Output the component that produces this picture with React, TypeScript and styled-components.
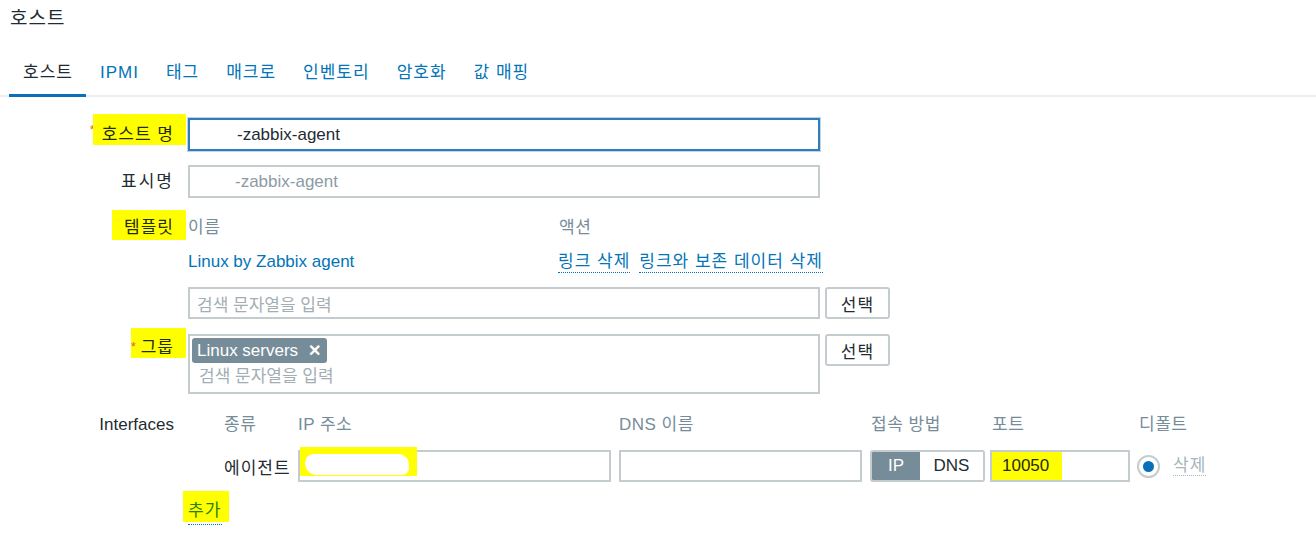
import React from "react";
import styled, { createGlobalStyle } from "styled-components";

const FONT = `"Liberation Sans", Arial, "Noto Sans CJK KR", sans-serif`;
const DARK = "#1f2c33";
const LINK = "#0275b8";
const MUTED = "#768d99";
const BORDER = "#c4ccd0";
const MARK = "#ffff00";

const GlobalStyle = createGlobalStyle`
  html, body { margin: 0; padding: 0; background: #ffffff; }
  body { font-family: ${FONT}; color: ${DARK}; font-size: 17px; }
  * { box-sizing: border-box; }
`;

const Page = styled.div`
  width: 1316px;
  height: 536px;
  overflow: hidden;
`;

const Title = styled.h1`
  margin: 8px 0 0 10px;
  font-size: 19px;
  letter-spacing: 1px;
  font-weight: normal;
  line-height: 22px;
  color: ${DARK};
`;

const TabList = styled.nav`
  display: flex;
  margin-top: 30px;
  padding-left: 9px;
  box-shadow: inset 0 -2px 0 #eceff1;
`;

const Tab = styled.span<{ $active?: boolean }>`
  padding: 0 13px 8px 14px;
  line-height: 26px;
  font-size: 17px;
  letter-spacing: 1px;
  white-space: nowrap;
  color: ${(p) => (p.$active ? DARK : LINK)};
  border-bottom: 3px solid ${(p) => (p.$active ? "#0a6fbb" : "transparent")};
`;

const Form = styled.div`
  margin-top: 21px;
  display: flex;
  flex-direction: column;
`;

const Row = styled.div<{ $mt?: number }>`
  display: grid;
  grid-template-columns: 188px 1fr;
  margin-top: ${(p) => p.$mt ?? 0}px;
`;

const LabelCell = styled.div<{ $mt?: number; $lh?: number }>`
  display: flex;
  justify-content: flex-end;
  align-items: flex-start;
  align-self: start;
  padding-right: 14px;
  margin-top: ${(p) => p.$mt ?? 0}px;
  line-height: ${(p) => p.$lh ?? 24}px;
  font-size: 17px;
  letter-spacing: 1px;
  white-space: nowrap;
  color: ${DARK};
`;

const PlainLabel = styled.span<{ $ls?: number }>`
  letter-spacing: ${(p) => p.$ls ?? 1}px;
`;

const Highlight = styled.span<{ $pt: number; $pb?: number; $pl: number; $pr?: number }>`
  display: inline-flex;
  align-items: flex-start;
  background: ${MARK};
  line-height: 20px;
  padding: ${(p) => `${p.$pt}px ${p.$pr ?? 12}px ${p.$pb ?? 0}px ${p.$pl}px`};
  margin-right: -${(p) => p.$pr ?? 12}px;
  color: #1f2c10;
`;

const Asterisk = styled.span<{ $gap?: number; $mt?: number }>`
  color: #e0633a;
  font-size: 13px;
  line-height: 12px;
  letter-spacing: 0;
  margin-top: ${(p) => p.$mt ?? 0}px;
  margin-right: ${(p) => p.$gap ?? 5}px;
`;

const TextBox = styled.div<{ $focused?: boolean; $w?: number; $h?: number; $pl?: number; $muted?: boolean }>`
  position: relative;
  width: ${(p) => p.$w ?? 632}px;
  height: ${(p) => p.$h ?? 33}px;
  border: 2px solid ${(p) => (p.$focused ? "#2f7cbc" : BORDER)};
  box-shadow: ${(p) => (p.$focused ? "0 0 0 1px #bcd6ec" : "none")};
  display: flex;
  align-items: center;
  padding-left: ${(p) => p.$pl ?? 7}px;
  font-size: 17px;
  white-space: nowrap;
  color: ${(p) => (p.$muted ? "#8c9ba3" : DARK)};
  background: #fff;
`;

const Placeholder = styled.span`
  color: #a3aeb4;
`;

const TwoCol = styled.div`
  display: grid;
  grid-template-columns: 371px auto;
  line-height: 24px;
`;

const HeadCell = styled.span`
  color: ${MUTED};
  font-size: 17px;
  letter-spacing: 0.5px;
`;

const TemplateLink = styled.span`
  color: ${LINK};
  font-size: 17px;
`;

const Actions = styled.div`
  display: flex;
  align-items: center;
  gap: 9px;
  margin-left: -1px;
`;

const DottedLink = styled.span<{ $muted?: boolean }>`
  color: ${(p) => (p.$muted ? "#a7b5bc" : LINK)};
  border-bottom: 1px dotted ${(p) => (p.$muted ? "#a7b5bc" : LINK)};
  line-height: 20px;
  letter-spacing: 1px;
  white-space: nowrap;
`;

const Stack = styled.div`
  display: flex;
  flex-direction: column;
`;

const LinkRow = styled(TwoCol)`
  margin-top: 10px;
`;

const FieldLine = styled.div<{ $mt?: number }>`
  display: flex;
  align-items: flex-start;
  gap: 5px;
  margin-top: ${(p) => p.$mt ?? 0}px;
`;

const SelectButton = styled.button`
  width: 65px;
  height: 32px;
  border: 2px solid ${BORDER};
  border-radius: 3px;
  background: #fff;
  font-family: ${FONT};
  font-size: 17px;
  letter-spacing: 1px;
  color: ${DARK};
  padding: 0;
`;

const MultiBox = styled.div`
  width: 632px;
  height: 60px;
  border: 2px solid ${BORDER};
  padding: 2px;
  display: flex;
  flex-direction: column;
  align-items: flex-start;
`;

const Chip = styled.span`
  display: inline-flex;
  align-items: center;
  gap: 10px;
  height: 25px;
  padding: 0 6px 0 5px;
  background: ${MUTED};
  border-radius: 3px;
  color: #fff;
  font-size: 17px;
  white-space: nowrap;
`;

const ChipX = styled.span`
  font-weight: bold;
  font-size: 16px;
`;

const MultiPlaceholder = styled(Placeholder)`
  margin: 2px 0 0 7px;
  line-height: 24px;
  white-space: nowrap;
`;

const IfaceGrid = styled.div`
  display: grid;
  grid-template-columns: 74px 321px 251px 120px 147px 36px auto;
  padding-left: 36px;
  align-items: center;
  white-space: nowrap;
`;

const IfaceHead = styled.span<{ $pl?: number }>`
  color: ${MUTED};
  line-height: 24px;
  letter-spacing: 0.5px;
  padding-left: ${(p) => p.$pl ?? 0}px;
`;

const IfaceData = styled(IfaceGrid)`
  margin-top: 13px;
`;

const TypeText = styled.span`
  color: ${DARK};
  letter-spacing: 1px;
`;

const Redact = styled.span`
  position: absolute;
  left: 0;
  top: -5px;
  width: 117px;
  height: 29px;
  background: ${MARK};
`;

const Scribble = styled.span`
  position: absolute;
  left: 5px;
  top: 7px;
  width: 104px;
  height: 21px;
  border-radius: 10px 12px 8px 14px;
  background: #fff;
`;

const Segmented = styled.div`
  display: flex;
  width: 115px;
  height: 32px;
  border: 2px solid ${BORDER};
  border-radius: 3px;
  overflow: hidden;
`;

const Segment = styled.span<{ $on?: boolean; $w: number }>`
  width: ${(p) => p.$w}px;
  display: flex;
  align-items: center;
  justify-content: center;
  background: ${(p) => (p.$on ? MUTED : "#fff")};
  color: ${(p) => (p.$on ? "#fff" : DARK)};
  font-size: 17px;
`;

const PortBox = styled(TextBox)`
  padding-left: 0;
  align-items: stretch;
`;

const PortMark = styled.span`
  display: flex;
  align-items: center;
  width: 70px;
  padding-left: 10px;
  background: ${MARK};
  color: #1f2c10;
`;

const Radio = styled.span`
  width: 23px;
  height: 23px;
  border: 2px solid ${BORDER};
  border-radius: 50%;
  display: flex;
  align-items: center;
  justify-content: center;
  &::after {
    content: "";
    width: 11px;
    height: 11px;
    border-radius: 50%;
    background: #0a6fbb;
  }
`;

const AddWrap = styled.div`
  display: inline-flex;
  flex-direction: column;
  align-items: flex-start;
  margin-top: 9px;
`;

const AddMark = styled.span`
  display: inline-block;
  background: ${MARK};
  padding: 10px 8px 1px 5px;
  margin-left: -5px;
  line-height: 20px;
  letter-spacing: 1px;
  color: #2a7f0c;
`;

const AddUnderline = styled.span`
  width: 34px;
  margin-top: 2px;
  border-top: 1px dotted ${LINK};
`;

export default function App() {
  return (
    <Page>
      <GlobalStyle />
      <Title>호스트</Title>
      <TabList>
        <Tab $active>호스트</Tab>
        <Tab>IPMI</Tab>
        <Tab>태그</Tab>
        <Tab>매크로</Tab>
        <Tab>인벤토리</Tab>
        <Tab>암호화</Tab>
        <Tab>값 매핑</Tab>
      </TabList>

      <Form>
        <Row>
          <LabelCell $mt={-4}>
            <Asterisk $gap={-2} $mt={10}>*</Asterisk>
            <Highlight $pt={11} $pl={9}>호스트 명</Highlight>
          </LabelCell>
          <TextBox $focused $pl={47}>-zabbix-agent</TextBox>
        </Row>

        <Row $mt={14}>
          <LabelCell $lh={33}>
            <PlainLabel $ls={2}>표시명</PlainLabel>
          </LabelCell>
          <TextBox $pl={45} $muted>-zabbix-agent</TextBox>
        </Row>

        <Row $mt={18}>
          <LabelCell $mt={-6}>
            <Highlight $pt={8} $pb={2} $pl={12}>템플릿</Highlight>
          </LabelCell>
          <Stack>
            <TwoCol>
              <HeadCell>이름</HeadCell>
              <HeadCell>액션</HeadCell>
            </TwoCol>
            <LinkRow>
              <TemplateLink>Linux by Zabbix agent</TemplateLink>
              <Actions>
                <DottedLink>링크 삭제</DottedLink>
                <DottedLink>링크와 보존 데이터 삭제</DottedLink>
              </Actions>
            </LinkRow>
            <FieldLine $mt={13}>
              <TextBox $h={32} $pl={7}>
                <Placeholder>검색 문자열을 입력</Placeholder>
              </TextBox>
              <SelectButton>선택</SelectButton>
            </FieldLine>
          </Stack>
        </Row>

        <Row $mt={15}>
          <LabelCell $mt={-6}>
            <Highlight $pt={10} $pl={0}>
              <Asterisk $mt={3}>*</Asterisk>그룹
            </Highlight>
          </LabelCell>
          <FieldLine>
            <MultiBox>
              <Chip>
                Linux servers<ChipX>✕</ChipX>
              </Chip>
              <MultiPlaceholder>검색 문자열을 입력</MultiPlaceholder>
            </MultiBox>
            <SelectButton>선택</SelectButton>
          </FieldLine>
        </Row>

        <Row $mt={19}>
          <LabelCell>
            <PlainLabel $ls={0}>Interfaces</PlainLabel>
          </LabelCell>
          <Stack>
            <IfaceGrid>
              <IfaceHead>종류</IfaceHead>
              <IfaceHead>IP 주소</IfaceHead>
              <IfaceHead>DNS 이름</IfaceHead>
              <IfaceHead $pl={1}>접속 방법</IfaceHead>
              <IfaceHead $pl={2}>포트</IfaceHead>
              <IfaceHead $pl={2}>디폴트</IfaceHead>
              <span />
            </IfaceGrid>
            <IfaceData>
              <TypeText>에이전트</TypeText>
              <TextBox $w={313} $h={32}>
                <Redact>
                  <Scribble />
                </Redact>
              </TextBox>
              <TextBox $w={243} $h={32} />
              <Segmented>
                <Segment $on $w={48}>IP</Segment>
                <Segment $w={63}>DNS</Segment>
              </Segmented>
              <PortBox $w={140} $h={32}>
                <PortMark>10050</PortMark>
              </PortBox>
              <Radio />
              <span>
                <DottedLink $muted>삭제</DottedLink>
              </span>
            </IfaceData>
            <div>
              <AddWrap>
                <AddMark>추가</AddMark>
                <AddUnderline />
              </AddWrap>
            </div>
          </Stack>
        </Row>
      </Form>
    </Page>
  );
}
